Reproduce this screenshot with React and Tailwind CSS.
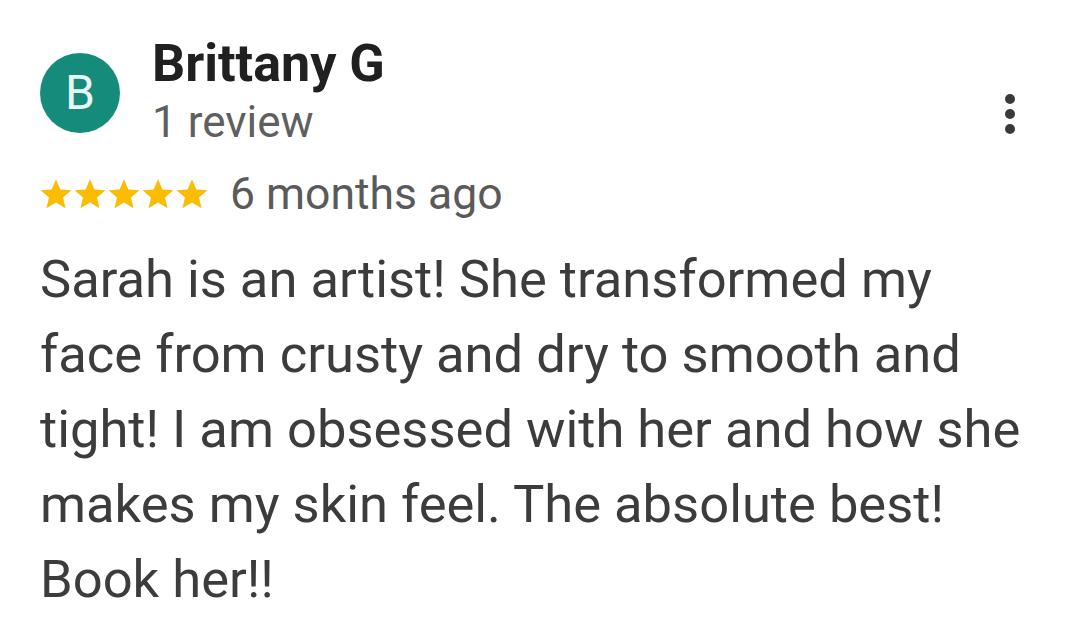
function Star() {
  return (
    <svg viewBox="0 0 24 24" className="-mx-[1px] h-[36px] w-[36px]" fill="#fbbc04">
      <path d="M12 2.2l2.95 6.75 7.3.6-5.55 4.8 1.65 7.15L12 17.7l-6.35 3.8 1.65-7.15-5.55-4.8 7.3-.6z" />
    </svg>
  )
}

export default function App() {
  const lines = [
    'Sarah is an artist! She transformed my',
    'face from crusty and dry to smooth and',
    'tight! I am obsessed with her and how she',
    'makes my skin feel. The absolute best!',
    'Book her!!',
  ]

  return (
    <div
      className="h-[624px] w-[1080px] overflow-hidden bg-white pl-[40px] pr-[40px]"
      style={{ fontFamily: 'Roboto, "Liberation Sans", sans-serif' }}
    >
      <div className="flex items-start pt-[34px]">
        <div className="mt-[19px] flex h-[80px] w-[80px] shrink-0 items-center justify-center rounded-full bg-[#158b7b] text-[48px] leading-none text-[#e8f5f2]">
          B
        </div>
        <div className="ml-[32px] flex-1">
          <p className="text-[52px] font-bold leading-[60px] text-[#202020]">Brittany G</p>
          <p className="mt-[2px] text-[44px] leading-[52px] text-[#5f5f5f]">1 review</p>
        </div>
        <div className="mr-[20px] mt-[60px] flex w-[20px] flex-col items-center gap-[5px]">
          <span className="h-[10px] w-[10px] rounded-full bg-[#3a3a3a]" />
          <span className="h-[10px] w-[10px] rounded-full bg-[#3a3a3a]" />
          <span className="h-[10px] w-[10px] rounded-full bg-[#3a3a3a]" />
        </div>
      </div>

      <div className="mt-[20px] flex items-center">
        <div className="-ml-[1px] flex">
          <Star />
          <Star />
          <Star />
          <Star />
          <Star />
        </div>
        <span className="ml-[21px] text-[44.5px] leading-[52px] text-[#5a5a5a]">6 months ago</span>
      </div>

      <div className="mt-[22px] text-[52.5px] leading-[75px] text-[#3c3c3c]">
        {lines.map((l) => (
          <p key={l} className="whitespace-nowrap">{l}</p>
        ))}
      </div>
    </div>
  )
}
